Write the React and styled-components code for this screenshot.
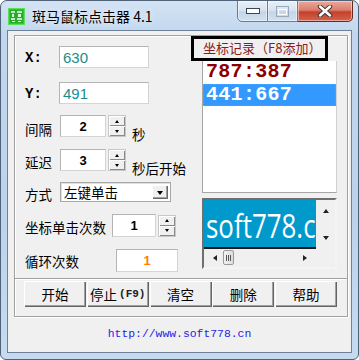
import React from 'react';
import styled, { createGlobalStyle } from 'styled-components';

const cjk = `"Noto Sans CJK SC", "Liberation Sans", sans-serif`;
const mono = `"Liberation Mono", "Noto Sans CJK SC", monospace`;

const GlobalStyle = createGlobalStyle`
  html, body {
    margin: 0;
    padding: 0;
    background: #ffffff;
  }
  * {
    box-sizing: border-box;
  }
`;

const Window = styled.div`
  width: 359px;
  height: 360px;
  border: 1px solid #4f6277;
  border-radius: 7px 7px 6px 6px;
  background: linear-gradient(180deg, #d3e3f4 0%, #c2d7ee 9%, #bcd3eb 60%, #c6dbf0 100%);
  display: flex;
  flex-direction: column;
  padding: 0 6px 6px 6px;
  overflow: hidden;
`;

const TitleBar = styled.div`
  height: 29px;
  display: flex;
  align-items: flex-start;
`;

const AppIcon = styled.svg`
  width: 17px;
  height: 17px;
  margin: 7px 0 0 1px;
  flex: none;
`;

const TitleText = styled.div`
  margin: 5px 0 0 7px;
  font-family: ${cjk};
  font-size: 14px;
  line-height: 20px;
  color: #000;
  text-shadow: 0 0 6px rgba(255, 255, 255, 0.9);
  flex: 1;
`;

const CaptionGroup = styled.div`
  display: flex;
  margin: -1px -1px 0 0;
`;

const CaptionButton = styled.div`
  width: ${p => p.w}px;
  height: 22px;
  display: flex;
  align-items: center;
  justify-content: center;
  border: 1px solid ${p => (p.close ? '#6b2a20' : '#6a7c92')};
  border-left: ${p => (p.first ? '1px solid #6a7c92' : 'none')};
  border-radius: ${p => (p.first ? '0 0 0 5px' : p.close ? '0 0 5px 0' : '0')};
  background: ${p =>
    p.close
      ? 'linear-gradient(180deg, #e9a99b 0%, #dc7f6c 45%, #c4402b 55%, #d4644c 100%)'
      : 'linear-gradient(180deg, #e9f0f8 0%, #d8e4f1 45%, #c3d5e9 55%, #d2e1f1 100%)'};
  box-shadow: inset 0 0 0 1px rgba(255, 255, 255, 0.45);
`;

const Client = styled.div`
  flex: 1;
  border: 1px solid #6d8299;
  background: #f0f0f0;
  display: flex;
  flex-direction: column;
  padding: 4px 3px 0 6px;
`;

const Panel = styled.div`
  width: 334px;
  border: 1px solid #a0a0a0;
  box-shadow: inset 1px 1px 0 #ffffff, 1px 1px 0 #ffffff;
  display: flex;
  flex-direction: column;
`;

const TopArea = styled.div`
  height: 242px;
  display: flex;
`;

const LeftColumn = styled.div`
  width: 176px;
  padding-left: 10px;
  display: flex;
  flex-direction: column;
`;

const Row = styled.div`
  display: flex;
  align-items: center;
  height: ${p => p.h || 22}px;
  margin-top: ${p => p.gap}px;
`;

const Label = styled.div`
  width: ${p => p.w}px;
  flex: none;
  font-family: ${cjk};
  font-size: 13.5px;
  line-height: 18px;
  color: #000;
  padding-top: ${p => p.drop || 0}px;
`;

const AxisLabel = styled(Label)`
  font-family: ${mono};
  font-weight: bold;
  font-size: 14px;
  padding-top: 2px;
`;

const Field = styled.div`
  width: ${p => p.w}px;
  height: 100%;
  flex: none;
  background: #ffffff;
  border: 1px solid #d4d4d4;
  border-top-color: #b4b4b4;
  border-left-color: #b4b4b4;
  display: flex;
  align-items: center;
  justify-content: ${p => (p.center ? 'center' : 'flex-start')};
  padding-left: ${p => (p.center ? 0 : 3)}px;
  font-family: "Liberation Sans", sans-serif;
  font-size: ${p => (p.center ? 13 : 15)}px;
  font-weight: ${p => (p.center ? 'bold' : 'normal')};
  color: ${p => p.color || '#000'};
`;

const Spinner = styled.div`
  width: 18px;
  height: 22px;
  margin-left: 2px;
  flex: none;
  display: flex;
  flex-direction: column;
  border: 1px solid #c8c8c8;
`;

const SpinHalf = styled.div`
  flex: 1;
  background: #f0f0f0;
  box-shadow: inset 1px 1px 0 #ffffff, inset -1px -1px 0 #8a8a8a;
  display: flex;
  align-items: center;
  justify-content: center;
  &::after {
    content: '';
    border-left: 2.5px solid transparent;
    border-right: 2.5px solid transparent;
    ${p => (p.up ? 'border-bottom: 3px solid #000;' : 'border-top: 3px solid #000;')}
  }
`;

const Unit = styled.div`
  margin-left: 6px;
  align-self: flex-end;
  margin-bottom: -6px;
  font-family: ${cjk};
  font-size: 13.5px;
  line-height: 18px;
  color: #000;
  white-space: nowrap;
`;

const Select = styled.div`
  width: 111px;
  height: 100%;
  flex: none;
  background: #ffffff;
  border: 1px solid #a8a8a8;
  box-shadow: inset 1px 1px 0 #e0e0e0;
  display: flex;
  align-items: center;
  justify-content: space-between;
  padding: 0 2px 0 3px;
  font-family: ${cjk};
  font-size: 13.5px;
  color: #000;
`;

const DropButton = styled.div`
  width: 16px;
  height: 14px;
  background: #f0f0f0;
  box-shadow: inset 1px 1px 0 #ffffff, inset -1px -1px 0 #696969, inset -2px -2px 0 #a0a0a0;
  display: flex;
  align-items: center;
  justify-content: center;
  &::after {
    content: '';
    border-left: 3.5px solid transparent;
    border-right: 3.5px solid transparent;
    border-top: 4px solid #000;
    margin-top: 1px;
  }
`;

const RightColumn = styled.div`
  flex: 1;
  display: flex;
  flex-direction: column;
`;

const RecordTitle = styled.div`
  width: 137px;
  height: 25px;
  border: 3px solid #000;
  padding-left: 9px;
  font-family: ${cjk};
  font-size: 13px;
  line-height: 18px;
  color: #8b1a1a;
  white-space: nowrap;
`;

const ListBox = styled.div`
  width: 135px;
  height: 132px;
  margin-left: 11px;
  background: #ffffff;
  border: 1px solid #a6a6a6;
  border-top: none;
  border-right-color: #d0d0d0;
`;

const ListItem = styled.div`
  height: 22px;
  margin-bottom: 1px;
  padding-left: 2px;
  font-family: ${mono};
  font-weight: bold;
  font-size: 20px;
  line-height: 20px;
  color: ${p => (p.selected ? '#ffffff' : '#8b0000')};
  background: ${p => (p.selected ? '#3399ff' : 'transparent')};
  border: 1px ${p => (p.selected ? 'dotted #c98a4a' : 'solid transparent')};
  letter-spacing: 0.3px;
`;

const AdBox = styled.div`
  width: 135px;
  height: 71px;
  margin: 5px 0 0 11px;
  border: 2px solid;
  border-color: #6f6f6f #f4f4f4 #f4f4f4 #6f6f6f;
  display: grid;
  grid-template-columns: 112px 19px;
  grid-template-rows: 49px 17px;
  background: #f0f0f0;
`;

const AdContent = styled.div`
  background: #0099cc;
  border-bottom: 2px solid #1a1a1a;
  overflow: hidden;
  display: flex;
  align-items: flex-end;
`;

const AdText = styled.div`
  font-family: "Open Sans", sans-serif;
  font-size: 32px;
  line-height: 36px;
  color: #ffffff;
  white-space: nowrap;
  transform: scaleX(0.81);
  transform-origin: left bottom;
  margin: 0 0 3px 2px;
`;

const VScroll = styled.div`
  background: #f0f0f0;
  display: flex;
  flex-direction: column;
  justify-content: space-between;
  align-items: center;
  padding: 9px 0 9px;
`;

const HScroll = styled.div`
  background: #f0f0f0;
  display: flex;
  align-items: center;
  padding: 0 9px;
`;

const Arrow = styled.div`
  width: 0;
  height: 0;
  ${p =>
    p.dir === 'up' &&
    'border-left: 3.5px solid transparent; border-right: 3.5px solid transparent; border-bottom: 4px solid #222;'}
  ${p =>
    p.dir === 'down' &&
    'border-left: 3.5px solid transparent; border-right: 3.5px solid transparent; border-top: 4px solid #222;'}
  ${p =>
    p.dir === 'left' &&
    'border-top: 3.5px solid transparent; border-bottom: 3.5px solid transparent; border-right: 4px solid #222;'}
  ${p =>
    p.dir === 'right' &&
    'border-top: 3.5px solid transparent; border-bottom: 3.5px solid transparent; border-left: 4px solid #222;'}
`;

const Thumb = styled.div`
  width: 11px;
  height: 15px;
  margin: 0 auto 0 6px;
  border: 1px solid #9a9a9a;
  border-radius: 2px;
  background: linear-gradient(90deg, #f2f2f2, #dcdcdc);
  display: flex;
  align-items: center;
  justify-content: center;
  gap: 1px;
`;

const Grip = styled.span`
  width: 1px;
  height: 6px;
  background: #555;
`;

const Divider = styled.div`
  height: 2px;
  border-top: 1px solid #a0a0a0;
  border-bottom: 1px solid #ffffff;
`;

const ButtonRow = styled.div`
  display: grid;
  grid-template-columns: repeat(5, 62px);
  column-gap: 0.75px;
  padding: 1px 0 9px 9px;
`;

const Button = styled.div`
  height: 26px;
  background: #f0f0f0;
  box-shadow: inset 1px 1px 0 #ffffff, inset -1px -1px 0 #646464, inset -2px -2px 0 #a0a0a0;
  display: flex;
  align-items: center;
  justify-content: center;
  font-family: ${cjk};
  font-size: 13.5px;
  color: #000;
`;

const Key = styled.span`
  font-family: ${mono};
  font-weight: bold;
  font-size: 11px;
  margin-left: 2px;
  color: #222;
`;

const UrlBar = styled.div`
  flex: 1;
  display: flex;
  align-items: center;
  justify-content: center;
  padding-right: 3px;
  padding-bottom: 2px;
  font-family: ${mono};
  font-size: 11.4px;
  color: #2424e6;
`;

function App() {
  return (
    <>
      <GlobalStyle />
      <Window>
        <TitleBar>
          <AppIcon viewBox="0 0 17 17">
            <rect x="0.5" y="0.5" width="16" height="16" fill="#3cbf3c" stroke="#58e058" />
            <rect x="2" y="2" width="13" height="13" fill="#2ea82e" />
            <rect x="3" y="3" width="4" height="2" fill="#b8f0b8" />
            <rect x="9" y="3" width="5" height="2" fill="#b8f0b8" />
            <rect x="4" y="6" width="2" height="3" fill="#d8ffd8" />
            <rect x="10" y="6" width="3" height="3" fill="#d8ffd8" />
            <rect x="3" y="10" width="4" height="2" fill="#b8f0b8" />
            <rect x="9" y="10" width="5" height="2" fill="#b8f0b8" />
            <rect x="4" y="13" width="3" height="1" fill="#d8ffd8" />
            <rect x="10" y="13" width="3" height="1" fill="#d8ffd8" />
          </AppIcon>
          <TitleText>斑马鼠标点击器 4.1</TitleText>
          <CaptionGroup>
            <CaptionButton w={31} first>
              <svg width="14" height="6" viewBox="0 0 14 6">
                <rect x="0.5" y="0.5" width="13" height="5" fill="#ffffff" stroke="#3a4656" />
              </svg>
            </CaptionButton>
            <CaptionButton w={30}>
              <svg width="13" height="11" viewBox="0 0 13 11">
                <rect x="0.5" y="0.5" width="12" height="10" fill="none" stroke="#9aa9bb" />
                <rect x="2.5" y="3.5" width="8" height="5" fill="none" stroke="#ffffff" />
              </svg>
            </CaptionButton>
            <CaptionButton w={55} close>
              <svg width="16" height="12" viewBox="0 0 16 12">
                <path d="M3 1.5 L13 10.5 M13 1.5 L3 10.5" stroke="#3b3b3b" strokeWidth="4.4" strokeLinecap="round" />
                <path d="M3 1.5 L13 10.5 M13 1.5 L3 10.5" stroke="#ffffff" strokeWidth="2.4" strokeLinecap="round" />
              </svg>
            </CaptionButton>
          </CaptionGroup>
        </TitleBar>

        <Client>
          <Panel>
            <TopArea>
              <LeftColumn>
                <Row gap={10}>
                  <AxisLabel w={34}>X:</AxisLabel>
                  <Field w={90} color="#1a8c8c">630</Field>
                </Row>
                <Row gap={14}>
                  <AxisLabel w={34}>Y:</AxisLabel>
                  <Field w={90} color="#1a8c8c">491</Field>
                </Row>
                <Row gap={11}>
                  <Label w={35} drop={6}>间隔</Label>
                  <Field w={46} center>2</Field>
                  <Spinner>
                    <SpinHalf up />
                    <SpinHalf />
                  </Spinner>
                  <Unit>秒</Unit>
                </Row>
                <Row gap={12}>
                  <Label w={35} drop={4}>延迟</Label>
                  <Field w={46} center>3</Field>
                  <Spinner>
                    <SpinHalf up />
                    <SpinHalf />
                  </Spinner>
                  <Unit>秒后开始</Unit>
                </Row>
                <Row gap={11} h={20}>
                  <Label w={35} drop={3}>方式</Label>
                  <Select>
                    左键单击
                    <DropButton />
                  </Select>
                </Row>
                <Row gap={12} h={23}>
                  <Label w={87} drop={2}>坐标单击次数</Label>
                  <Field w={44} center>1</Field>
                  <Spinner>
                    <SpinHalf up />
                    <SpinHalf />
                  </Spinner>
                </Row>
                <Row gap={12} h={23}>
                  <Label w={91} drop={1}>循环次数</Label>
                  <Field w={62} center color="#ff7f00">1</Field>
                </Row>
              </LeftColumn>

              <RightColumn>
                <RecordTitle>坐标记录（F8添加）</RecordTitle>
                <ListBox>
                  <ListItem>787:387</ListItem>
                  <ListItem selected>441:667</ListItem>
                </ListBox>
                <AdBox>
                  <AdContent>
                    <AdText>soft778.cn</AdText>
                  </AdContent>
                  <VScroll>
                    <Arrow dir="up" />
                    <Arrow dir="down" />
                  </VScroll>
                  <HScroll>
                    <Arrow dir="left" />
                    <Thumb>
                      <Grip />
                      <Grip />
                      <Grip />
                    </Thumb>
                    <Arrow dir="right" />
                  </HScroll>
                  <div />
                </AdBox>
              </RightColumn>
            </TopArea>

            <Divider />

            <ButtonRow>
              <Button>开始</Button>
              <Button>
                停止<Key>(F9)</Key>
              </Button>
              <Button>清空</Button>
              <Button>删除</Button>
              <Button>帮助</Button>
            </ButtonRow>
          </Panel>

          <UrlBar>http://www.soft778.cn</UrlBar>
        </Client>
      </Window>
    </>
  );
}

export default App;
